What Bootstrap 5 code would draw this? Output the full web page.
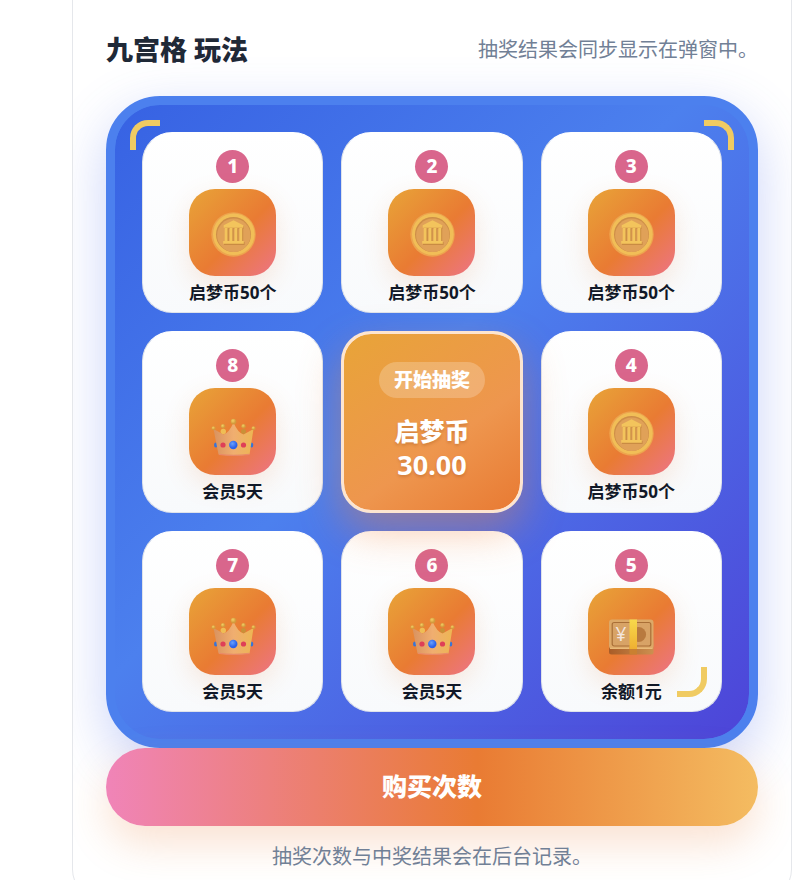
<!DOCTYPE html>
<html lang="zh-CN">
<head>
<meta charset="utf-8">
<meta name="viewport" content="width=device-width, initial-scale=1">
<title>九宫格 玩法</title>
<link href="https://cdn.jsdelivr.net/npm/bootstrap@5.3.0/dist/css/bootstrap.min.css" rel="stylesheet">
<style>
body { font-family: "Noto Sans", "Noto Sans CJK SC", sans-serif; background: #fff; height: 100vh; overflow: hidden; }
.page { padding: 0 3px 0 72px; }
.panel { background: #fff; border: 1px solid #e5e7eb; border-top: 0; border-radius: 0 0 32px 32px; padding: 30px 33px 28px; overflow: hidden; }
.panel-title { font-size: 27px; line-height: 40px; font-weight: 800; color: #1f2937; }
.hint { font-size: 20px; line-height: 30px; color: #718096; font-weight: 400; }
.board { position: relative; margin-top: 26px; padding: 27px; border: 9px solid #4c80ee; border-radius: 54px;
  background: linear-gradient(135deg, #3762e3 0%, #4c80ee 45%, #4d44d8 100%) padding-box, linear-gradient(#4c80ee, #4c80ee) border-box;
  box-shadow: 0 18px 54px rgba(79, 110, 235, .3); }
.prizes { display: grid; grid-template-columns: repeat(3, minmax(0, 1fr)); gap: 18px; }
.prize { aspect-ratio: 1; padding-top: 17px; gap: 6px; border-radius: 30px; border: 1px solid #dfe3ea; border-top-color: #fff;
  background: linear-gradient(180deg, #fff, #f8fafc); }
.num { width: 33px; height: 33px; background: #d9668c; color: #fff; font-size: 19px; line-height: 33px; font-weight: 800; }
.tile { width: 87px; height: 87px; border-radius: 26px; background: linear-gradient(135deg, #e8a438 0%, #e97b33 55%, #ed7486 100%);
  box-shadow: 0 9px 27px rgba(233, 123, 51, .16); }
.tile svg { width: 48px; height: 48px; }
.prize-name { font-size: 17px; line-height: 22px; font-weight: 700; color: #111827; }
.start { position: relative; z-index: 1; aspect-ratio: 1; border: 3px solid #fde5d0; border-radius: 30px; color: #fff; padding: 0;
  background: linear-gradient(145deg, #e8a438 0%, #ee964e 60%, #e87a33 100%) padding-box, linear-gradient(#fde5d0, #fde5d0) border-box;
  box-shadow: 0 18px 42px rgba(240, 130, 60, .42); }
.start-tag { background: rgba(255, 255, 255, .22); font-size: 19px; line-height: 36px; font-weight: 800; padding: 0 15px; margin-bottom: 16px; }
.cost { font-size: 25px; line-height: 34px; font-weight: 800; text-shadow: 0 2px 3px rgba(120, 50, 0, .22); }
.amount { font-size: 27px; font-weight: 700; }
.corner { position: absolute; width: 30px; height: 30px; border: 0 solid #f0cb62; z-index: 2; }
.corner-tl { top: 15px; left: 15px; border-width: 6px 0 0 6px; border-top-left-radius: 18px; }
.corner-tr { top: 15px; right: 15px; border-width: 6px 6px 0 0; border-top-right-radius: 18px; }
.corner-br { bottom: 42px; right: 42px; border-width: 0 6px 6px 0; border-bottom-right-radius: 18px; }
.buy { position: relative; height: 78px; border: 0; color: #fff; font-size: 25px; font-weight: 800;
  background: linear-gradient(90deg, #f084b8 0%, #e97b33 57%, #f4bc61 100%); box-shadow: 0 18px 40px rgba(233, 123, 51, .22); }
.note { position: relative; margin-top: 16px; }
.defs { position: absolute; }
</style>
</head>
<body>
<svg class="defs" width="0" height="0" aria-hidden="true">
  <defs>
    <linearGradient id="gCrown" x1="0" y1="0" x2="1" y2="0"><stop offset="0" stop-color="#d9925f"/><stop offset=".5" stop-color="#f0ae70"/><stop offset="1" stop-color="#edb653"/></linearGradient>
    <linearGradient id="gBand" x1="0" y1="0" x2="0" y2="1"><stop offset="0" stop-color="#f8d94b"/><stop offset="1" stop-color="#efb032"/></linearGradient>
    <linearGradient id="gSide" x1="0" y1="0" x2="1" y2="0"><stop offset="0" stop-color="#a95c27"/><stop offset="1" stop-color="#cc9050"/></linearGradient>
    <radialGradient id="gGem" cx=".4" cy=".35"><stop offset="0" stop-color="#68a0ff"/><stop offset="1" stop-color="#2c62ea"/></radialGradient>
    <radialGradient id="gBall" cx=".4" cy=".35"><stop offset="0" stop-color="#f4cf65"/><stop offset="1" stop-color="#d39a3c"/></radialGradient>
  </defs>
  <symbol id="coin" viewBox="0 0 48 48">
    <circle cx="24.5" cy="25.5" r="22.2" fill="#eda44e"/>
    <circle cx="24.8" cy="25.2" r="20.8" fill="#f1be57"/>
    <circle cx="24.5" cy="25.5" r="17.5" fill="#ce8e48"/>
    <circle cx="24.8" cy="26.2" r="16.7" fill="#e0a158"/>
    <g fill="#c98b43" transform="translate(.8 .9)"><path d="M24.5 11.5 34 16.6v2.2H15v-2.2zM16 19h3v13h-3zM20.8 19h3v13h-3zM25.6 19h3v13h-3zM30.4 19h3v13h-3zM14.2 32h20.6v3H14.2z"/></g>
    <path d="M24.5 11.2 34.3 16.3v2.5H14.7v-2.5zM15.7 19h2.8v13h-2.8zM20.6 19h2.8v13h-2.8zM25.5 19h2.8v13h-2.8zM30.4 19h2.8v13h-2.8zM14.2 32h20.6v2.8H14.2z" fill="#f3c45c"/>
  </symbol>
  <symbol id="crown" viewBox="0 0 48 48">
    <circle cx="14" cy="18.3" r="2.2" fill="url(#gBall)"/><circle cx="34.5" cy="18.3" r="2.2" fill="url(#gBall)"/>
    <circle cx="14.3" cy="23.5" r="2.7" fill="#efbd55"/><circle cx="34.5" cy="23.5" r="2.5" fill="#c99137"/>
    <ellipse cx="6.8" cy="37" rx="1.8" ry="2.5" fill="#3974d5"/><ellipse cx="42.5" cy="37" rx="1.8" ry="2.5" fill="#3974d5"/>
    <path d="M4.5 21 14.5 26.5Q20 25 24.5 14.5 29 25 34.5 26.5L44.5 21 40.5 46.5Q24.5 48.5 9.5 46.5z" fill="url(#gCrown)"/>
    <path d="M10 46.3Q24.5 48.5 40 46.3" fill="none" stroke="#e98a69" stroke-width="1.2"/>
    <circle cx="4.5" cy="20.2" r="2" fill="url(#gBall)"/><circle cx="44.5" cy="20.2" r="2" fill="url(#gBall)"/>
    <circle cx="24.5" cy="13.6" r="2.8" fill="url(#gBall)"/>
    <circle cx="24.3" cy="37" r="4.2" fill="url(#gGem)"/>
    <circle cx="14" cy="37" r="2.6" fill="#df3f57"/><circle cx="34.5" cy="37" r="2.6" fill="#df3f57"/>
  </symbol>
</svg>
<main class="page">
  <section class="panel">
    <header class="d-flex justify-content-between align-items-center">
      <h1 class="panel-title mb-0">九宫格 玩法</h1>
      <p class="hint mb-0">抽奖结果会同步显示在弹窗中。</p>
    </header>
    <div class="board">
      <span class="corner corner-tl"></span><span class="corner corner-tr"></span><span class="corner corner-br"></span>
      <div class="prizes">
        <div class="prize d-flex flex-column align-items-center"><span class="num rounded-circle text-center">1</span><span class="tile d-flex align-items-center justify-content-center"><svg><use href="#coin"/></svg></span><span class="prize-name">启梦币50个</span></div>
        <div class="prize d-flex flex-column align-items-center"><span class="num rounded-circle text-center">2</span><span class="tile d-flex align-items-center justify-content-center"><svg><use href="#coin"/></svg></span><span class="prize-name">启梦币50个</span></div>
        <div class="prize d-flex flex-column align-items-center"><span class="num rounded-circle text-center">3</span><span class="tile d-flex align-items-center justify-content-center"><svg><use href="#coin"/></svg></span><span class="prize-name">启梦币50个</span></div>
        <div class="prize d-flex flex-column align-items-center"><span class="num rounded-circle text-center">8</span><span class="tile d-flex align-items-center justify-content-center"><svg><use href="#crown"/></svg></span><span class="prize-name">会员5天</span></div>
        <button type="button" class="start d-flex flex-column align-items-center justify-content-center"><span class="start-tag rounded-pill">开始抽奖</span><span class="cost">启梦币</span><span class="cost amount">30.00</span></button>
        <div class="prize d-flex flex-column align-items-center"><span class="num rounded-circle text-center">4</span><span class="tile d-flex align-items-center justify-content-center"><svg><use href="#coin"/></svg></span><span class="prize-name">启梦币50个</span></div>
        <div class="prize d-flex flex-column align-items-center"><span class="num rounded-circle text-center">7</span><span class="tile d-flex align-items-center justify-content-center"><svg><use href="#crown"/></svg></span><span class="prize-name">会员5天</span></div>
        <div class="prize d-flex flex-column align-items-center"><span class="num rounded-circle text-center">6</span><span class="tile d-flex align-items-center justify-content-center"><svg><use href="#crown"/></svg></span><span class="prize-name">会员5天</span></div>
        <div class="prize d-flex flex-column align-items-center"><span class="num rounded-circle text-center">5</span><span class="tile d-flex align-items-center justify-content-center">
          <svg viewBox="0 0 48 48">
            <rect x="2" y="33" width="44.5" height="14.5" rx="2.5" fill="url(#gSide)"/>
            <rect x="2" y="12.5" width="44.5" height="29.5" rx="3" fill="#dda968"/>
            <path d="M3 41.3H45.5" stroke="#e9bb79" stroke-width="1.2"/>
            <rect x="5.2" y="15.5" width="38.6" height="23.5" rx="2" fill="#d8a366" stroke="#a96f37" stroke-width="1.2"/>
            <circle cx="31.5" cy="27.5" r="7.6" fill="#b87a3f"/>
            <rect x="22.5" y="40" width="7.5" height="7.5" fill="#c98031"/>
            <rect x="22.5" y="12.5" width="7.5" height="29.5" fill="url(#gBand)"/>
            <text x="14" y="34" text-anchor="middle" font-size="19" fill="#f3e6df">¥</text>
          </svg></span><span class="prize-name">余额1元</span></div>
      </div>
    </div>
    <button type="button" class="buy d-block w-100 rounded-pill">购买次数</button>
    <p class="hint note text-center mb-0">抽奖次数与中奖结果会在后台记录。</p>
  </section>
</main>
<script src="https://cdn.jsdelivr.net/npm/bootstrap@5.3.0/dist/js/bootstrap.bundle.min.js"></script>
</body>
</html>
